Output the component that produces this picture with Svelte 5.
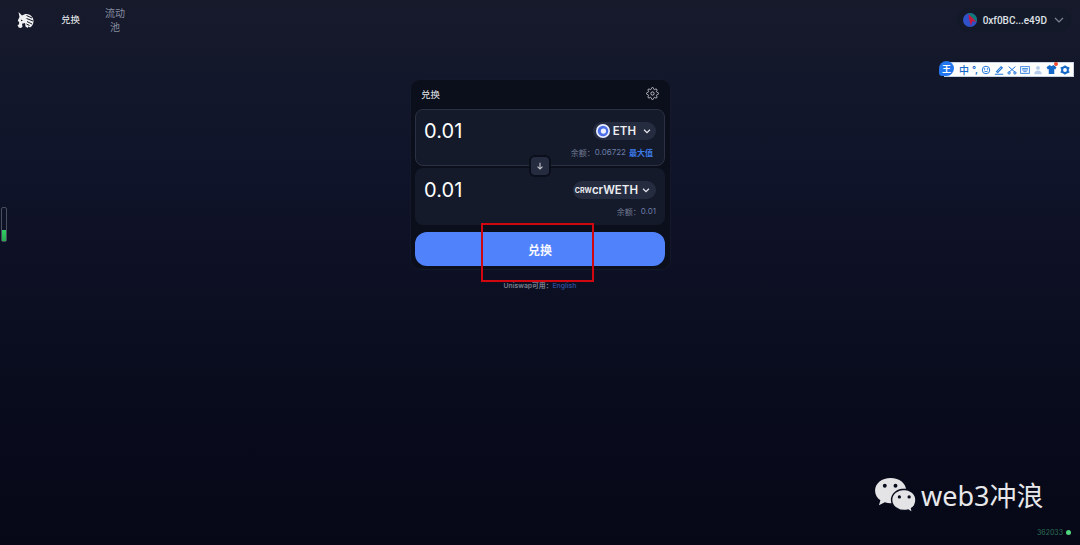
<script>
  const cjk = "中";
</script>

<div class="page">
  <header class="topbar">
    <div class="nav-left">
      <svg class="logo" viewBox="0 0 17 17" width="17" height="17">
        <path d="M1.500 0l3.500 3.500C7 2 10 1.500 12 2.500c2.500 1 4.500 3.500 4.500 6.500 0 3-1.500 5.500-3.500 6.500l-1.500-1-1 1.500-2-1.500-.5-3.500-3 .8.500 3-1.500 1.200-2.300-.5L.5 13l1.500-.5.200-2L.8 8.500 2.500 5z" fill="#f0f0f3"/>
        <path d="M9.500 3.500l5.500 2.500M9.500 6.500l6.500 2.500M10 9.500l5 2.500M9.500 12l3 1.500" stroke="#141827" stroke-width="1" fill="none"/>
        <path d="M3.800 7.500l2.200 1-1.800.8z" fill="#141827"/>
      </svg>
      <a class="nav-item active">兑换</a>
      <a class="nav-item muted">流动<br />池</a>
    </div>
    <div class="wallet">
      <svg class="avatar" viewBox="0 0 14 14" width="14" height="14">
        <circle cx="7" cy="7" r="7" fill="#2f52c9"/>
        <path d="M5 .2C8 -.5 12 .8 13.700 5L14 9 8 4.500z" fill="#0f7a78"/>
        <path d="M5.500 1l8 8-4-1-1.500 5-2-7z" fill="#c8173f"/>
      </svg>
      <span class="address">0xf0BC...e49D</span>
      <svg class="chev" viewBox="0 0 12 12" width="12" height="12">
        <path d="M2 4l4 4 4-4" stroke="#7f8596" stroke-width="1.200" fill="none"/>
      </svg>
    </div>
  </header>

  <main class="center">
    <section class="card">
      <div class="card-head">
        <span>兑换</span>
        <svg viewBox="0 0 24 24" width="13" height="13" fill="none" stroke="#c3c5cb" stroke-width="1.800">
          <circle cx="12" cy="12" r="3" />
          <path d="M19.400 15a1.700 1.700 0 0 0 .3 1.800l.1.100a2 2 0 1 1-2.900 2.900l-.1-.1a1.700 1.700 0 0 0-2.800 1.200V21a2 2 0 1 1-4 0v-.1a1.700 1.700 0 0 0-2.900-1.200l-.1.100a2 2 0 1 1-2.800-2.900l.1-.1a1.700 1.700 0 0 0-1.200-2.800H3a2 2 0 1 1 0-4h.1a1.700 1.700 0 0 0 1.200-2.900l-.1-.1a2 2 0 1 1 2.900-2.800l.1.100a1.700 1.700 0 0 0 1.800.3H9a1.700 1.700 0 0 0 1-1.500V3a2 2 0 1 1 4 0v.1a1.700 1.700 0 0 0 2.900 1.200l.1-.1a2 2 0 1 1 2.800 2.900l-.1.100a1.700 1.700 0 0 0-.3 1.800V9a1.700 1.700 0 0 0 1.500 1H21a2 2 0 1 1 0 4h-.1a1.700 1.700 0 0 0-1.500 1z" />
        </svg>
      </div>

      <div class="panel outlined">
        <div class="row">
          <span class="amount">0.01</span>
          <div class="token">
            <svg viewBox="0 0 16 16" width="14" height="14">
              <circle cx="8" cy="8" r="8" fill="#e8ecff"/>
              <circle cx="8" cy="8" r="6" fill="#4c6fe8"/>
              <circle cx="8.500" cy="8" r="3" fill="#eef1ff"/>
            </svg>
            <span>ETH</span>
            <svg class="caret" viewBox="0 0 12 12" width="10" height="10">
              <path d="M2.500 4.500L6 8l3.500-3.500" stroke="#e8e9ee" stroke-width="1.500" fill="none"/>
            </svg>
          </div>
        </div>
        <div class="balance">
          <span>余额：</span><span class="num">0.06722</span><span class="max">最大值</span>
        </div>
      </div>

      <div class="swap-arrow">
        <svg viewBox="0 0 12 12" width="10" height="10">
          <path d="M6 2v7.500M3 6.800L6 9.500l3-2.700" stroke="#c3c5cb" stroke-width="1.300" fill="none"/>
        </svg>
      </div>

      <div class="panel second">
        <div class="row">
          <span class="amount">0.01</span>
          <div class="token cr">
            <span class="crw">CRW</span>
            <span>crWETH</span>
            <svg class="caret" viewBox="0 0 12 12" width="10" height="10">
              <path d="M2.500 4.500L6 8l3.500-3.500" stroke="#e8e9ee" stroke-width="1.500" fill="none"/>
            </svg>
          </div>
        </div>
        <div class="balance">
          <span>余额：</span><span class="num">0.01</span>
        </div>
      </div>

      <button class="submit">兑换</button>
    </section>

    <p class="locale">Uniswap可用：<span>English</span></p>
  </main>

  <!-- things drawn on top of the screenshot -->
  <div class="red-box"></div>

  <div class="gauge"><div class="gauge-fill"></div></div>

  <div class="ime">
    <span class="ime-badge">王</span>
    <span class="ime-item">{cjk}</span>
    <span class="ime-item small">°,</span>
    <svg viewBox="0 0 12 12" width="10" height="10" fill="none" stroke="#2277dd" stroke-width="1.200"><circle cx="6" cy="6" r="4.500"/><path d="M4 7.200c1 1 3 1 4 0"/><circle cx="4.300" cy="4.800" r=".5"/><circle cx="7.700" cy="4.800" r=".5"/></svg>
    <svg viewBox="0 0 12 12" width="10" height="10" fill="none" stroke="#2277dd" stroke-width="1.300"><path d="M3 8l5.500-6 1.500 1.300L4.500 9zM1 11h10"/></svg>
    <svg viewBox="0 0 12 12" width="10" height="10" fill="none" stroke="#2277dd" stroke-width="1.200"><path d="M2 2l8 7M10 2L2 9"/><circle cx="2.500" cy="9.500" r="1.400"/><circle cx="9.500" cy="9.500" r="1.400"/></svg>
    <svg viewBox="0 0 12 12" width="10" height="10" fill="none" stroke="#2277dd" stroke-width="1"><rect x=".8" y="2" width="10.400" height="8"/><path d="M2.500 4.300h7M2.500 6h7M4 8h4"/></svg>
    <svg viewBox="0 0 12 12" width="10" height="10" fill="#b5cdea"><circle cx="6" cy="3.500" r="2.300"/><path d="M1.500 11c0-3 2-4.500 4.500-4.500s4.500 1.500 4.500 4.500z"/></svg>
    <span class="shirt">
      <svg viewBox="0 0 12 12" width="11" height="11" fill="#1668c8"><path d="M4 1L.5 3.500 2 6l1-.5V11h6V5.500L10 6l1.500-2.500L8 1 6 2.500z"/></svg>
      <i class="dot"></i>
    </span>
    <svg viewBox="0 0 12 12" width="10" height="10"><circle cx="6" cy="6" r="3.500" fill="none" stroke="#1668c8" stroke-width="2.400"/><path d="M6 .5v2M6 9.500v2M.8 3l1.800 1M9.400 8l1.800 1M.8 9l1.800-1M9.400 4l1.800-1" stroke="#1668c8" stroke-width="1.800"/></svg>
  </div>

  <div class="watermark">
    <svg viewBox="0 0 44 38" width="43" height="37">
      <path d="M17 1C8 1 1 6.500 1 14c0 4 2.200 7.500 5.500 10L5 29l6-3c2 .6 4 .9 6 .9 9 0 16-5.500 16-13S26 1 17 1z" fill="#e4e4e6"/>
      <path d="M31 12.500c-7 0-13 4.700-13 11s6 11 13 11c1.400 0 2.800-.2 4-.6l4.500 3-1-4.600c2.800-2 4.500-5.200 4.500-8.800 0-6.300-6-11-12.500-11z" fill="#e4e4e6" stroke="#090c1d" stroke-width="1.500"/>
      <circle cx="11" cy="9" r="2" fill="#090c1d"/>
      <circle cx="22" cy="9" r="2" fill="#090c1d"/>
      <circle cx="26" cy="20.500" r="1.700" fill="#090c1d"/>
      <circle cx="36" cy="20.500" r="1.700" fill="#090c1d"/>
    </svg>
    <span>web3冲浪</span>
  </div>

  <div class="block">
    <span>362033</span><i></i>
  </div>
</div>

<style>
  :global(body) {
    margin: 0;
    background: #0a0d1e;
  }

  .page {
    position: relative;
    width: 1080px;
    height: 545px;
    overflow: hidden;
    background: linear-gradient(180deg, #161a2b 0%, #10142a 30%, #090c1d 70%, #060817 100%);
    font-family: "Inter", "Noto Sans CJK SC", sans-serif;
    color: #fff;
  }

  .topbar {
    display: flex;
    justify-content: space-between;
    align-items: center;
    height: 40px;
    padding: 0 9px 0 17px;
  }

  .nav-left {
    display: flex;
    align-items: center;
  }

  .logo {
    margin-right: 27px;
  }

  .nav-item {
    font-size: 9.500px;
    line-height: 14px;
    text-align: center;
    white-space: nowrap;
  }

  .active {
    color: #f0f1f4;
  }

  .muted {
    color: #868ca0;
    font-size: 10px;
    margin-left: 25px;
  }

  .wallet {
    display: flex;
    align-items: center;
    gap: 6px;
    height: 24px;
    padding: 0 6px;
    border-radius: 12px;
    background: #141929;
  }

  .address {
    font-family: "Roboto", sans-serif;
    font-size: 10px;
    font-weight: 500;
    color: #dfe1e7;
  }

  .center {
    display: flex;
    flex-direction: column;
    align-items: center;
    padding-top: 39px;
  }

  .card {
    position: relative;
    box-sizing: border-box;
    width: 261px;
    height: 191px;
    padding: 0 4.500px;
    border-radius: 10px;
    background: #0b0e1b;
    border: 1px solid #14182a;
  }

  .card-head {
    display: flex;
    justify-content: space-between;
    align-items: center;
    box-sizing: border-box;
    height: 29px;
    padding: 0 6px 2px;
    font-size: 9.500px;
    color: #e4e5ea;
  }

  .panel {
    box-sizing: border-box;
    height: 57px;
    padding: 0 8px;
    border: 1px solid transparent;
    border-radius: 8px;
    background: #141a2a;
  }

  .outlined {
    border-color: #2b3142;
  }

  .second {
    margin-top: 2px;
  }

  .row {
    display: flex;
    justify-content: space-between;
    align-items: center;
    box-sizing: border-box;
    height: 36px;
    padding-top: 6px;
  }

  .amount {
    font-size: 20px;
    font-weight: 400;
    color: #fff;
    letter-spacing: 0.1px;
  }

  .token {
    display: flex;
    align-items: center;
    gap: 3px;
    height: 18px;
    padding: 0 4px 0 3px;
    border-radius: 9px;
    background: #262c40;
    font-size: 11.500px;
    font-weight: 600;
    color: #eceef2;
  }

  .caret {
    margin-left: 3px;
  }

  .cr {
    gap: 0;
    padding: 0 5px 0 2px;
    font-size: 11.500px;
  }

  .crw {
    font-size: 7px;
    font-weight: 700;
  }

  .balance {
    display: flex;
    justify-content: flex-end;
    align-items: center;
    height: 12px;
    font-size: 8px;
    color: #6f7891;
  }

  .num {
    color: #6c7da6;
  }

  .max {
    margin-left: 3px;
    color: #3d7bea;
    font-weight: 600;
    margin-right: 3px;
  }

  .swap-arrow {
    position: absolute;
    left: 118.500px;
    top: 75px;
    display: flex;
    align-items: center;
    justify-content: center;
    width: 18px;
    height: 18px;
    border: 2px solid #0b0e1b;
    border-radius: 6px;
    background: #262c40;
  }

  .submit {
    display: block;
    width: 100%;
    height: 34px;
    margin-top: 7px;
    border: 0;
    border-radius: 12px;
    background: #4f82fb;
    color: #f6f8ff;
    font-family: inherit;
    font-size: 12px;
    font-weight: 700;
  }

  .locale {
    margin: 10px 0 0;
    font-size: 6.800px;
    font-weight: 600;
    color: #7a7f8c;
  }

  .locale span {
    color: #2f4a94;
  }

  .red-box {
    position: absolute;
    left: 481px;
    top: 223px;
    width: 109px;
    height: 55px;
    border: 2px solid #d0070f;
    pointer-events: none;
  }

  .gauge {
    position: absolute;
    left: 1px;
    top: 207px;
    box-sizing: border-box;
    width: 6px;
    height: 35px;
    border: 1px solid #4a4f5c;
    border-radius: 2px;
    display: flex;
    align-items: flex-end;
  }

  .gauge-fill {
    width: 100%;
    height: 11px;
    background: linear-gradient(180deg, #2fd065, #28a853);
  }

  .ime {
    position: absolute;
    left: 944px;
    top: 62px;
    box-sizing: border-box;
    width: 130px;
    height: 15px;
    padding: 0 3px 0 14px;
    display: flex;
    align-items: center;
    justify-content: space-between;
    background: #fff;
    border: 1px solid #c8d3e6;
  }

  .ime-badge {
    position: absolute;
    left: -6px;
    top: -2px;
    display: flex;
    align-items: center;
    justify-content: center;
    width: 15px;
    height: 15px;
    border-radius: 50% 50% 50% 20%;
    background: #2277ee;
    color: #fff;
    font-size: 9px;
    font-weight: 700;
  }

  .ime-item {
    font-size: 10px;
    line-height: 1;
    font-weight: 500;
    color: #1668c8;
  }

  .small {
    font-size: 9px;
    font-weight: 700;
  }

  .shirt {
    position: relative;
    display: flex;
  }

  .dot {
    position: absolute;
    right: -1px;
    top: -2px;
    width: 4px;
    height: 4px;
    border-radius: 50%;
    background: #f04a30;
  }

  .watermark {
    position: absolute;
    left: 874px;
    top: 477px;
    display: flex;
    align-items: center;
    gap: 4px;
    font-family: "Noto Sans", "Noto Sans CJK SC", sans-serif;
    font-size: 27px;
    line-height: 37px;
    color: #e8e8ea;
  }

  .block {
    position: absolute;
    right: 9px;
    top: 528px;
    display: flex;
    align-items: center;
    gap: 3px;
    font-size: 7px;
    color: #2f6f55;
  }

  .block i {
    width: 5px;
    height: 5px;
    border-radius: 50%;
    background: #4fd67f;
  }
</style>
